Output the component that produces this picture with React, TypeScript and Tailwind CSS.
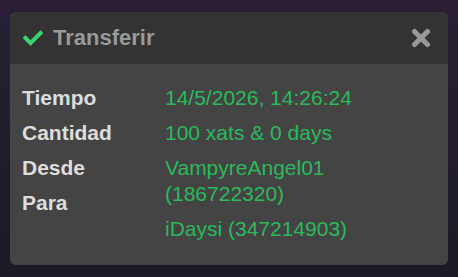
import { FaCheck } from 'react-icons/fa'

const labels = ['Tiempo', 'Cantidad', 'Desde', 'Para']
const values = [
  '14/5/2026, 14:26:24',
  '100 xats & 0 days',
  'VampyreAngel01 (186722320)',
  'iDaysi (347214903)',
]

export default function App() {
  return (
    <div
      className="w-[458px] h-[277px] overflow-hidden bg-gradient-to-b from-[#2a1f33] to-[#1c1a25] pt-3 pl-[10px]"
      style={{ fontFamily: '"Liberation Sans", Arial, sans-serif' }}
    >
      <div className="w-[438px] h-[253px] rounded-md overflow-hidden bg-[#444444] flex flex-col">
        {/* Header */}
        <div className="h-[52px] bg-[#333333] flex items-center pl-[13px] pr-[17px]">
          <FaCheck className="w-[20px] h-[20px] text-[#3dd170]" />
          <h1 className="ml-[10px] text-[22px] font-bold text-[#999999] leading-none">Transferir</h1>
          <svg className="ml-auto w-[20px] h-[20px]" viewBox="0 0 20 20">
            <path d="M3.5 3.5 L16.5 16.5 M16.5 3.5 L3.5 16.5" stroke="#999999" strokeWidth="5" strokeLinecap="round" />
          </svg>
        </div>

        {/* Body */}
        <div className="flex pt-[21px] pl-[12px] text-[21px] leading-[26px]">
          <div className="w-[143px] flex flex-col gap-[9px] font-bold text-[#dddddd]">
            {labels.map((l) => (
              <div key={l}>{l}</div>
            ))}
          </div>
          <div className="w-[220px] flex flex-col gap-[9px] text-[#2cb95c]">
            {values.map((v) => (
              <div key={v}>{v}</div>
            ))}
          </div>
        </div>
      </div>
    </div>
  )
}
